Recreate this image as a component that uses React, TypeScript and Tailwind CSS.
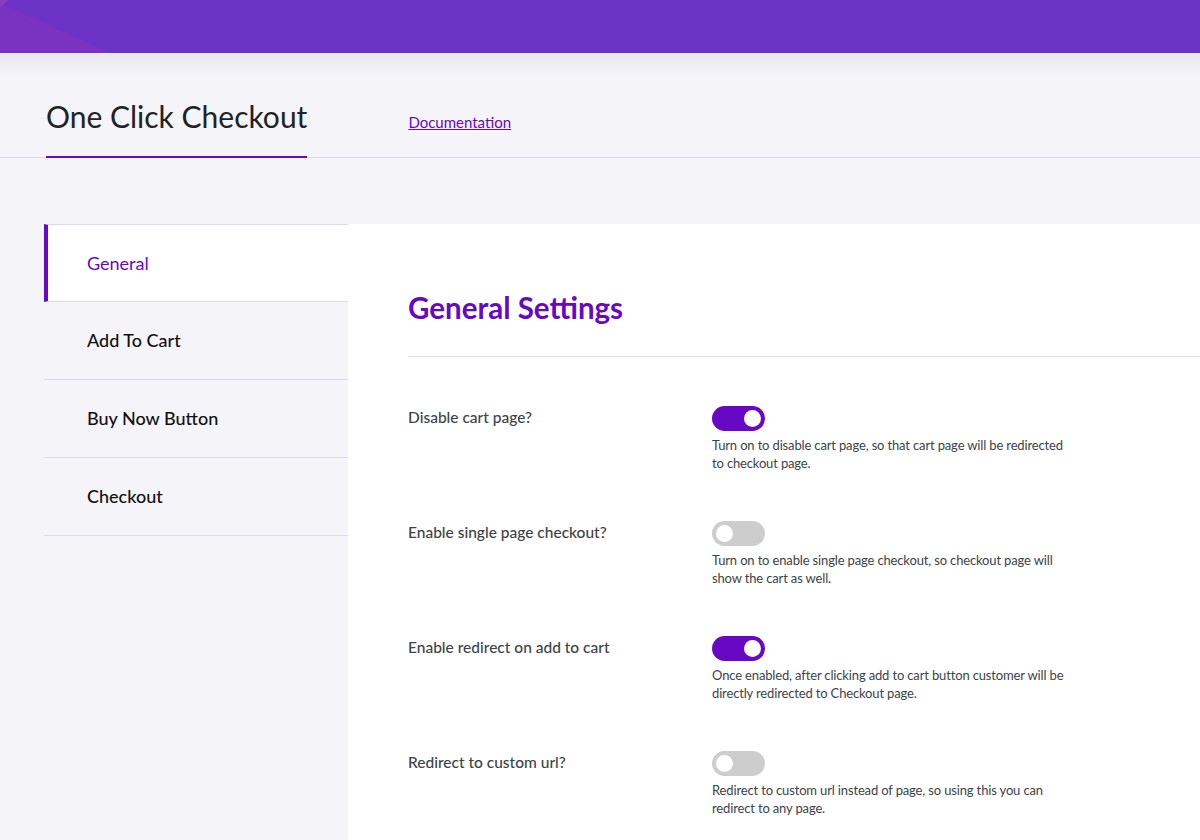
import React, { useState } from 'react';

type Setting = {
  id: string;
  label: string;
  help: string;
  on: boolean;
};

const TABS = ['General', 'Add To Cart', 'Buy Now Button', 'Checkout'];

const SETTINGS: Setting[] = [
  {
    id: 'disable-cart',
    label: 'Disable cart page?',
    help: 'Turn on to disable cart page, so that cart page will be redirected to checkout page.',
    on: true,
  },
  {
    id: 'single-page',
    label: 'Enable single page checkout?',
    help: 'Turn on to enable single page checkout, so checkout page will show the cart as well.',
    on: false,
  },
  {
    id: 'redirect',
    label: 'Enable redirect on add to cart',
    help: 'Once enabled, after clicking add to cart button customer will be directly redirected to Checkout page.',
    on: true,
  },
  {
    id: 'custom-url',
    label: 'Redirect to custom url?',
    help: 'Redirect to custom url instead of page, so using this you can redirect to any page.',
    on: false,
  },
];

function Toggle({ on, onChange }: { on: boolean; onChange: () => void }) {
  return (
    <button
      onClick={onChange}
      className={`flex h-[25px] w-[53px] items-center rounded-full px-[4px] ${
        on ? 'justify-end bg-[#6608c4]' : 'justify-start bg-[#cdcdcd]'
      }`}
    >
      <span className="block h-[17px] w-[17px] rounded-full bg-white" />
    </button>
  );
}

export default function App() {
  const [active, setActive] = useState('General');
  const [values, setValues] = useState<Record<string, boolean>>(
    Object.fromEntries(SETTINGS.map(s => [s.id, s.on]))
  );

  const toggle = (id: string) => {
    setValues(prev => ({ ...prev, [id]: !prev[id] }));
  };

  return (
    <div className="flex min-h-[840px] flex-col bg-[#f5f4f9] font-['Lato','Noto_Sans',sans-serif] text-[#1e1e1e]">
      {/* Top bar */}
      <div className="relative h-[53px] overflow-hidden bg-[#6d32c6]">
        <div className="absolute inset-0 bg-[#7a33c0] [clip-path:polygon(0_3px,110px_53px,0_53px)]" />
        <div className="absolute left-0 top-0 h-[8px] w-[8px] bg-[#8a3cc0] [clip-path:polygon(0_0,100%_0,0_100%)]" />
      </div>
      <div className="h-[24px] bg-gradient-to-b from-[#e9e8ee] to-[#f5f4f9]" />

      {/* Page header */}
      <div className="mt-[21px] flex items-end border-b border-[#dcd8ef] pl-[46px]">
        <h1 className="-mb-px border-b-2 border-[#6608c4] pb-[22px] text-[30px] font-normal leading-[36px] text-[#1d2327]">
          One Click Checkout
        </h1>
        <a href="#" className="mb-[24px] ml-[101px] text-[15px] text-[#6608c4] underline">
          Documentation
        </a>
      </div>

      {/* Body */}
      <div className="mt-[66px] flex flex-1">
        <nav className="ml-[44px] w-[304px] shrink-0">
          {TABS.map((tab, i) => {
            const isActive = tab === active;
            return (
              <button
                key={tab}
                onClick={() => setActive(tab)}
                className={`flex h-[78px] w-full items-center text-left text-[18px] ${
                  i === 0 ? 'border-t border-[#cfcfd6]' : ''
                } border-b border-[#dcd8ef] ${
                  isActive
                    ? 'border-l-4 border-l-[#6608c4] bg-white pl-[39px] text-[#6608c4]'
                    : 'pl-[43px] font-medium text-[#111]'
                }`}
              >
                {tab}
              </button>
            );
          })}
        </nav>

        <main className="flex-1 bg-white pl-[60px]">
          <h2 className="pt-[66px] text-[29.5px] font-bold leading-[36px] text-[#6608c4]">General Settings</h2>
          <div className="mt-[30px] border-b border-[#e2dff0]" />

          <div className="flex flex-col gap-[49px] pt-[49px]">
            {SETTINGS.map(s => (
              <div key={s.id} className="flex">
                <div className="w-[304px] shrink-0 text-[15.5px] font-medium text-[#3c434a]">
                  {s.label}
                </div>
                <div className="w-[360px]">
                  <Toggle on={values[s.id]} onChange={() => toggle(s.id)} />
                  <p className="mt-[5px] text-[13px] leading-[18px] tracking-[-0.15px] text-[#3c434a]">{s.help}</p>
                </div>
              </div>
            ))}
          </div>
        </main>
      </div>
    </div>
  );
}
